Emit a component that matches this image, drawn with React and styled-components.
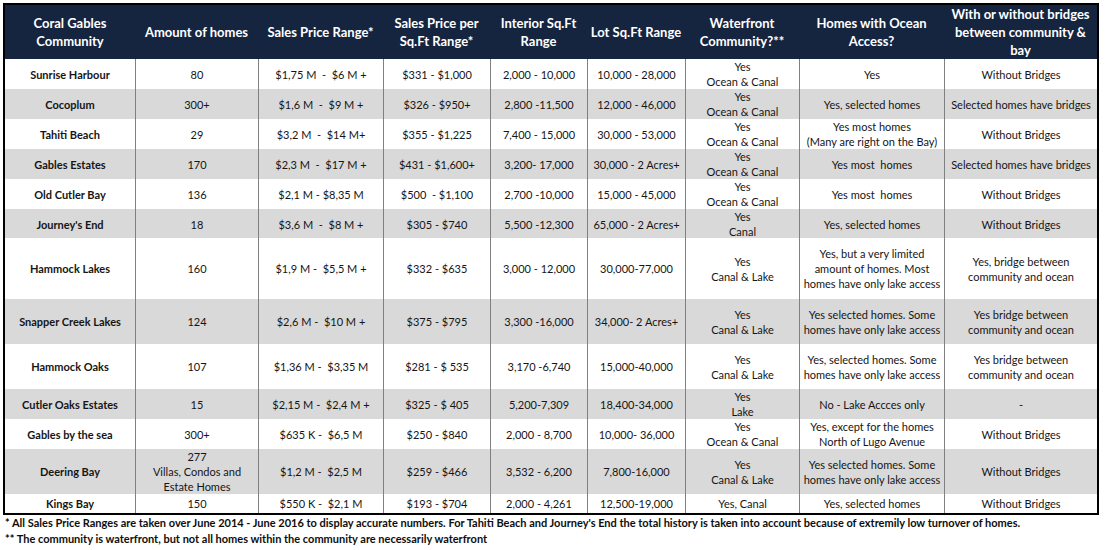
import React from 'react'
import styled, { createGlobalStyle } from 'styled-components'

const GlobalStyle = createGlobalStyle`
  body {
    margin: 0;
    background: #ffffff;
    font-family: Lato, "Open Sans", sans-serif;
    color: #151515;
  }
`

const COLS = '130px 123px 125px 107px 97px 98px 114px 145px 153px'

const Page = styled.div`
  padding: 3px 0 0 3px;
  width: 1100px;
`

const Table = styled.div`
  width: 1092px;
  border: 2px solid #000;
`

const HeadRow = styled.div`
  display: grid;
  grid-template-columns: ${COLS};
  height: 54px;
  background: #15243f;
`

const HeadCell = styled.div`
  display: flex;
  align-items: center;
  justify-content: center;
  text-align: center;
  color: #ffffff;
  font-weight: 700;
  font-size: 13px;
  line-height: 18px;
  white-space: pre-line;
`

const Row = styled.div`
  display: grid;
  grid-template-columns: ${COLS};
  height: ${(p) => p.$h}px;
  background: ${(p) => (p.$shade ? '#d9d9d9' : '#ffffff')};
`

const Cell = styled.div`
  display: flex;
  align-items: center;
  justify-content: center;
  text-align: center;
  font-size: 11px;
  line-height: 15px;
  font-weight: ${(p) => (p.$bold ? 700 : 400)};
  white-space: pre-wrap;
  overflow: visible;
  & + & {
    border-left: 1px solid #808080;
  }
`

const Notes = styled.div`
  padding: 0 0 0 2px;
  font-size: 11px;
  line-height: 16px;
  font-weight: 700;
  color: #0d0d0d;
`

const headers = [
  'Coral Gables\nCommunity',
  'Amount of homes',
  'Sales Price Range*',
  'Sales Price per\nSq.Ft Range*',
  'Interior Sq.Ft\nRange',
  'Lot Sq.Ft Range',
  'Waterfront\nCommunity?**',
  'Homes with Ocean\nAccess?',
  'With or without bridges\nbetween community &\nbay',
]

const rows = [
  [30, ['Sunrise Harbour', '80', '$1,75 M  -  $6 M +', '$331 - $1,000', '2,000 - 10,000', '10,000 - 28,000', 'Yes\nOcean & Canal', 'Yes', 'Without Bridges']],
  [30, ['Cocoplum', '300+', '$1,6 M  -  $9 M +', '$326 - $950+', '2,800 -11,500', '12,000 - 46,000', 'Yes\nOcean & Canal', 'Yes, selected homes', 'Selected homes have bridges']],
  [30, ['Tahiti Beach', '29', '$3,2 M  -  $14 M+', '$355 - $1,225', '7,400 - 15,000', '30,000 - 53,000', 'Yes\nOcean & Canal', 'Yes most homes\n(Many are right on the Bay)', 'Without Bridges']],
  [30, ['Gables Estates', '170', '$2,3 M  -  $17 M +', '$431 - $1,600+', '3,200- 17,000', '30,000 - 2 Acres+', 'Yes\nOcean & Canal', 'Yes most  homes', 'Selected homes have bridges']],
  [30, ['Old Cutler Bay', '136', '$2,1 M - $8,35 M', '$500  - $1,100', '2,700 -10,000', '15,000 - 45,000', 'Yes\nOcean & Canal', 'Yes most  homes', 'Without Bridges']],
  [29, ["Journey's End", '18', '$3,6 M  -  $8 M +', '$305 - $740', '5,500 -12,300', '65,000 - 2 Acres+', 'Yes\nCanal', 'Yes, selected homes', 'Without Bridges']],
  [61, ['Hammock Lakes', '160', '$1,9 M -  $5,5 M +', '$332 - $635', '3,000 - 12,000', '30,000-77,000', 'Yes\nCanal & Lake', 'Yes, but a very limited\namount of homes. Most\nhomes have only lake access', 'Yes, bridge between\ncommunity and ocean']],
  [45, ['Snapper Creek Lakes', '124', '$2,6 M -  $10 M +', '$375 - $795', '3,300 -16,000', '34,000- 2 Acres+', 'Yes\nCanal & Lake', 'Yes selected homes. Some\nhomes have only lake access', 'Yes bridge between\ncommunity and ocean']],
  [45, ['Hammock Oaks', '107', '$1,36 M -  $3,35 M', '$281 - $ 535', '3,170 -6,740', '15,000-40,000', 'Yes\nCanal & Lake', 'Yes, selected homes. Some\nhomes have only lake access', 'Yes bridge between\ncommunity and ocean']],
  [30, ['Cutler Oaks Estates', '15', '$2,15 M -  $2,4 M +', '$325 - $ 405', '5,200-7,309', '18,400-34,000', 'Yes\nLake', 'No - Lake Accces only', '-']],
  [30, ['Gables by the sea', '300+', '$635 K -  $6,5 M', '$250 - $840', '2,000 - 8,700', '10,000- 36,000', 'Yes\nOcean & Canal', 'Yes, except for the homes\nNorth of Lugo Avenue', 'Without Bridges']],
  [45, ['Deering Bay', '277\nVillas, Condos and\nEstate Homes', '$1,2 M -  $2,5 M', '$259 - $466', '3,532 - 6,200', '7,800-16,000', 'Yes\nCanal & Lake', 'Yes selected homes. Some\nhomes have only lake access', 'Without Bridges']],
  [19, ['Kings Bay', '150', '$550 K -  $2,1 M', '$193 - $704', '2,000 - 4,261', '12,500-19,000', 'Yes, Canal', 'Yes, selected homes', 'Without Bridges']],
]

export default function App() {
  return (
    <>
      <GlobalStyle />
      <Page>
        <Table>
          <HeadRow>
            {headers.map((h) => (
              <HeadCell key={h}>{h}</HeadCell>
            ))}
          </HeadRow>
          {rows.map(([h, cells], i) => (
            <Row key={cells[0]} $h={h} $shade={i % 2 === 1}>
              {cells.map((c, j) => (
                <Cell key={j} $bold={j === 0}>{c}</Cell>
              ))}
            </Row>
          ))}
        </Table>
        <Notes>
          <div>* All Sales Price Ranges are taken over June 2014 - June 2016 to display accurate numbers. For Tahiti Beach and Journey's End the total history is taken into account because of extremily low turnover of homes.</div>
          <div>** The community is waterfront, but not all homes within the community are necessarily waterfront</div>
        </Notes>
      </Page>
    </>
  )
}
